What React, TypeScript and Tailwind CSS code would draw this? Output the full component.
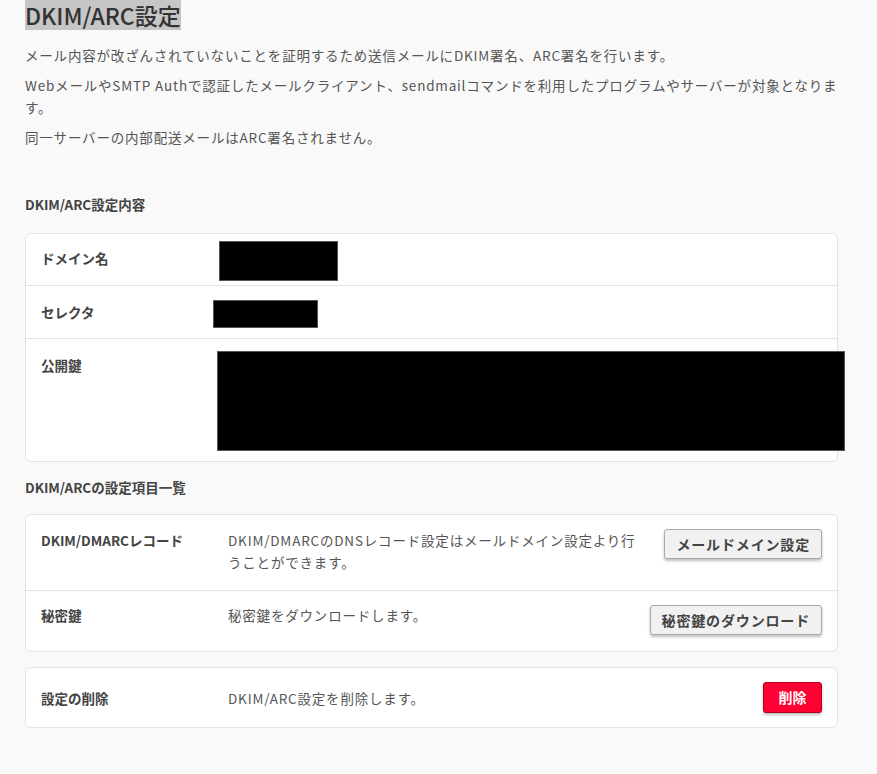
import React from 'react';

const FONT = { fontFamily: '"Noto Sans CJK JP", "Noto Sans", sans-serif' };

const Redacted: React.FC<{ className: string }> = ({ className }) => (
  <div className={`bg-black border border-[#555] shrink-0 ${className}`}></div>
);

const GrayButton: React.FC<{ children: React.ReactNode }> = ({ children }) => (
  <button className="h-[30px] px-[11px] bg-[#f1f1f1] border border-[#a9a9a9] rounded-[3px] text-[14px] font-bold text-[#444] tracking-[0.06em] shadow-[0_2px_3px_rgba(0,0,0,0.25)] whitespace-nowrap">
    {children}
  </button>
);

export default function App() {
  return (
    <div style={FONT} className="min-h-[774px] w-[877px] bg-[#f9f9f9] text-[#444] pl-[25px] pr-[39px] overflow-hidden">
      {/* Title */}
      <h1 className="inline-block bg-[#c6c6c6] text-[23px] leading-[30px] text-[#333] font-medium">
        DKIM/ARC設定
      </h1>

      {/* Description */}
      <div className="mt-[14px] text-[13.5px] leading-[22px] tracking-[0.06em] text-[#555] space-y-[8px]">
        <p>メール内容が改ざんされていないことを証明するため送信メールにDKIM署名、ARC署名を行います。</p>
        <p>WebメールやSMTP Authで認証したメールクライアント、sendmailコマンドを利用したプログラムやサーバーが対象となります。</p>
        <p>同一サーバーの内部配送メールはARC署名されません。</p>
      </div>

      {/* Settings content */}
      <h2 className="mt-[46px] text-[13.5px] font-bold text-[#444] leading-[20px]">DKIM/ARC設定内容</h2>
      <div className="mt-[19px] bg-white border border-[#e3e3e3] rounded-[6px]">
        <div className="flex h-[52px] border-b border-[#e3e3e3]">
          <div className="w-[193px] shrink-0 pl-[15px] pt-[14px] text-[13.5px] font-bold">ドメイン名</div>
          <Redacted className="mt-[7px] w-[119px] h-[40px]" />
        </div>
        <div className="flex h-[53px] border-b border-[#e3e3e3]">
          <div className="w-[187px] shrink-0 pl-[15px] pt-[16px] text-[13.5px] font-bold">セレクタ</div>
          <Redacted className="mt-[14px] w-[105px] h-[28px]" />
        </div>
        <div className="flex h-[122px]">
          <div className="w-[191px] shrink-0 pl-[15px] pt-[16px] text-[13.5px] font-bold">公開鍵</div>
          <Redacted className="mt-[12px] w-[628px] h-[100px]" />
        </div>
      </div>

      {/* Settings list */}
      <h2 className="mt-[15px] text-[13.5px] font-bold text-[#444] leading-[20px]">DKIM/ARCの設定項目一覧</h2>
      <div className="mt-[17px] bg-white border border-[#e3e3e3] rounded-[6px]">
        <div className="flex items-start h-[76px] border-b border-[#e3e3e3] pl-[15px] pr-[15px] pt-[14px]">
          <div className="w-[187px] shrink-0 text-[13.5px] font-bold leading-[22px]">DKIM/DMARCレコード</div>
          <div className="w-[420px] text-[13.5px] leading-[22px] tracking-[0.06em] text-[#555]">
            DKIM/DMARCのDNSレコード設定はメールドメイン設定より行うことができます。
          </div>
          <div className="ml-auto">
            <GrayButton>メールドメイン設定</GrayButton>
          </div>
        </div>
        <div className="flex items-start h-[60px] pl-[15px] pr-[15px] pt-[14px]">
          <div className="w-[187px] shrink-0 text-[13.5px] font-bold leading-[22px] -mt-[1px]">秘密鍵</div>
          <div className="text-[13.5px] leading-[22px] tracking-[0.06em] text-[#555] -mt-[1px]">秘密鍵をダウンロードします。</div>
          <div className="ml-auto">
            <GrayButton>秘密鍵のダウンロード</GrayButton>
          </div>
        </div>
      </div>

      <div className="mt-[15px] bg-white border border-[#e3e3e3] rounded-[6px] flex items-center h-[61px] pl-[15px] pr-[15px]">
        <div className="w-[187px] shrink-0 text-[13.5px] font-bold leading-[22px]">設定の削除</div>
        <div className="text-[13.5px] leading-[22px] tracking-[0.06em] text-[#555]">DKIM/ARC設定を削除します。</div>
        <button className="ml-auto h-[31px] w-[59px] bg-[#ff0033] border border-[#b00020] rounded-[3px] text-white text-[14px] font-bold shadow-[0_2px_3px_rgba(0,0,0,0.25)]">
          削除
        </button>
      </div>
    </div>
  );
}
